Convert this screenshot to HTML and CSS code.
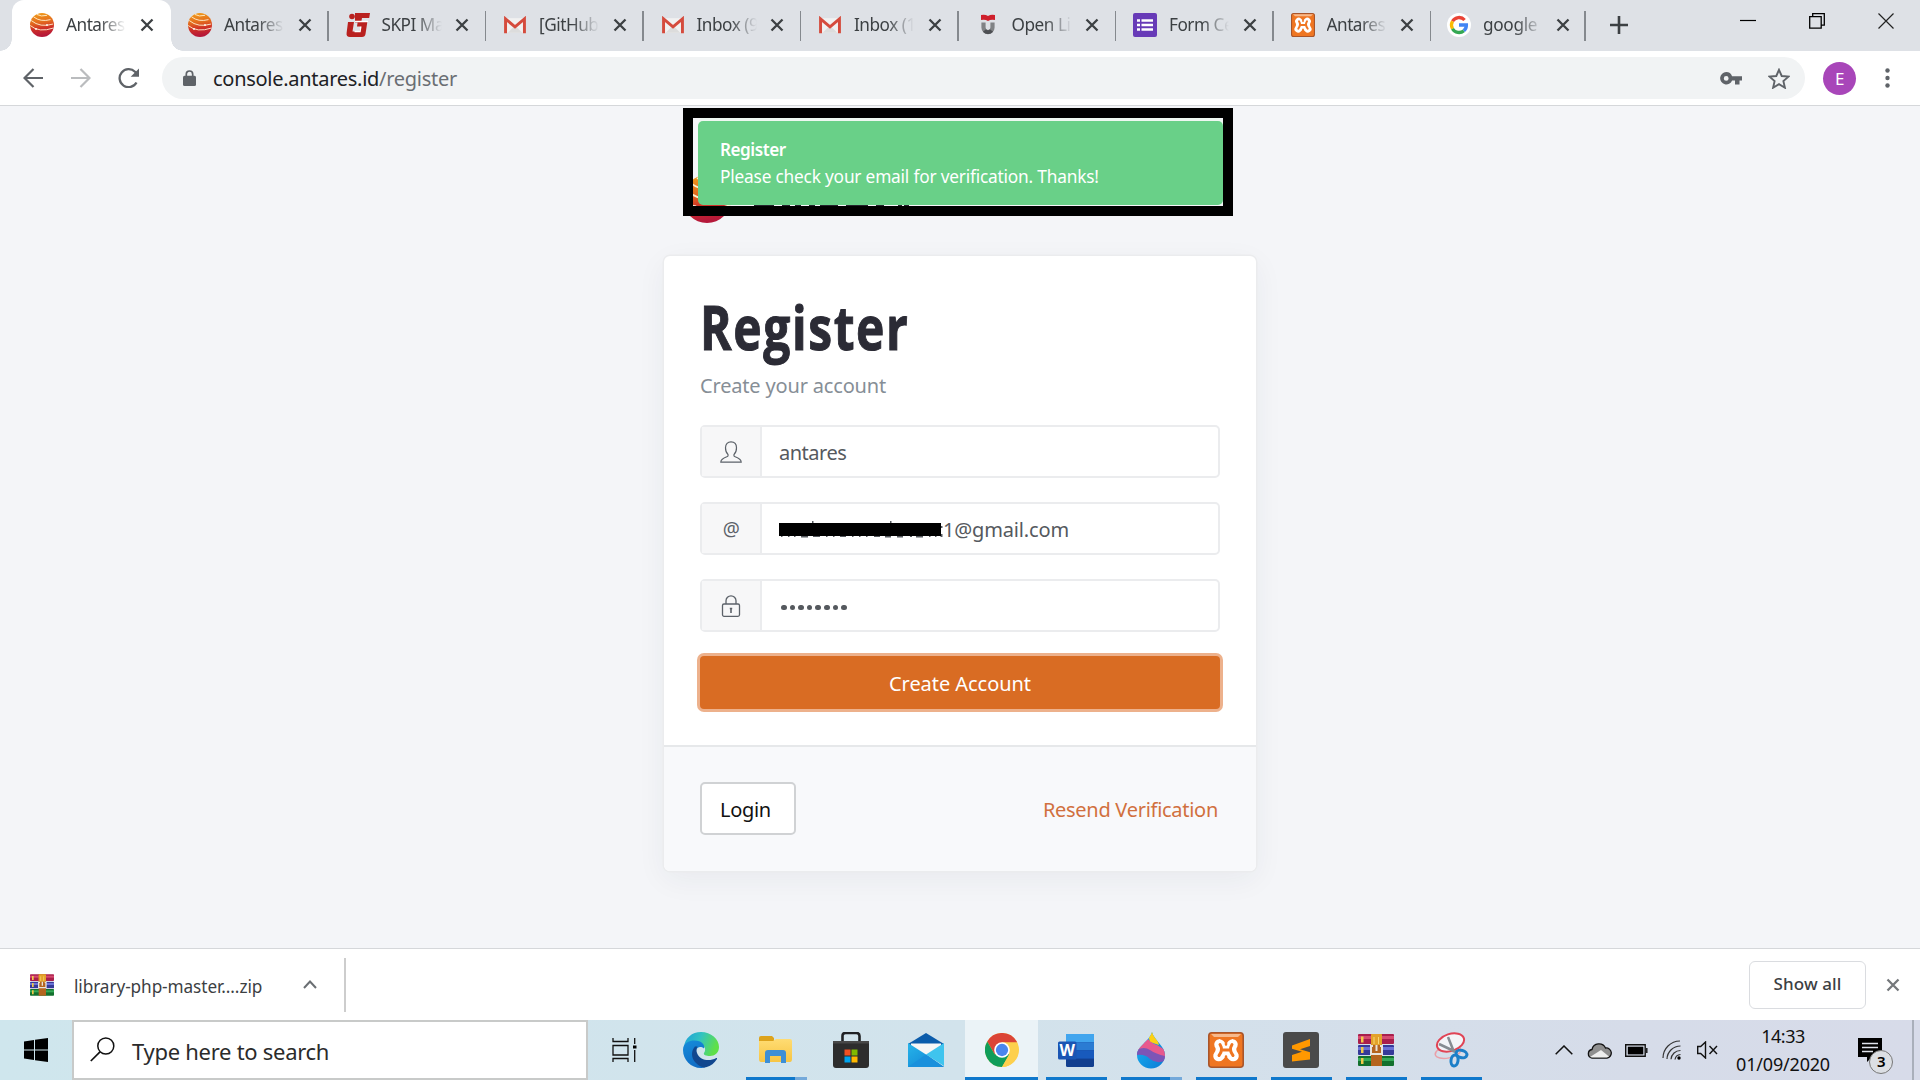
FILE: index.html
```html
<!DOCTYPE html>
<html lang="en">
<head>
<meta charset="utf-8">
<title>Antares Register</title>
<link rel="stylesheet" href="styles.css">
</head>
<body>
<svg class="defs" aria-hidden="true">
  <defs>
    <linearGradient id="ballg" x1="0" y1="0" x2="0.15" y2="1"><stop offset="0" stop-color="#f3a31b"/><stop offset=".45" stop-color="#e2681e"/><stop offset=".7" stop-color="#cf3027"/><stop offset="1" stop-color="#b5183a"/></linearGradient>
    <linearGradient id="edgea" x1="0" y1="0" x2="1" y2=".3"><stop offset="0" stop-color="#1c9fdc"/><stop offset=".5" stop-color="#33c3c0"/><stop offset="1" stop-color="#5fe048"/></linearGradient>
    <linearGradient id="edgeb" x1="0" y1="0" x2=".4" y2="1"><stop offset="0" stop-color="#168cda"/><stop offset="1" stop-color="#0f6cc4"/></linearGradient>
    <linearGradient id="drop" x1="0" y1="0" x2="1" y2="1"><stop offset="0" stop-color="#19b5f1"/><stop offset="1" stop-color="#0a7bd6"/></linearGradient>
    <linearGradient id="mailg" x1="0" y1="0" x2="1" y2="1"><stop offset="0" stop-color="#27b5ea"/><stop offset="1" stop-color="#0f7fd2"/></linearGradient>
    <linearGradient id="fold" x1="0" y1="0" x2="0" y2="1"><stop offset="0" stop-color="#ffdc73"/><stop offset="1" stop-color="#f7c544"/></linearGradient>
    <symbol id="ball" viewBox="0 0 24 24"><circle cx="12" cy="12" r="12" fill="url(#ballg)"/><path d="M3.500 3.800q7 5.500 17 2.800M1.200 7.500q9 7.500 22 3.500M.2 12.500Q9 20 23.500 15M7 1.500q4 2.500 10 .8" fill="none" stroke="#fff2d0" stroke-width=".9"/><circle cx="6" cy="16" r=".9" fill="#fff"/><circle cx="17" cy="12" r=".9" fill="#fff"/></symbol>
    <symbol id="gmail" viewBox="0 0 24 18"><path d="M2 1h20v16H2z" fill="#f1f1f1"/><path d="M4 17l8-8 8 8z" fill="#dcdcdc"/><path d="M1.700 17.500V1.800L12 10.500 22.300 1.800v15.700" fill="none" stroke="#d54b3d" stroke-width="3.200"/></symbol>
    <symbol id="close" viewBox="0 0 14 14"><path d="M1.500 1.500l11 11m0-11l-11 11" stroke="currentColor" stroke-width="2.300" fill="none"/></symbol>
    <symbol id="xampp" viewBox="0 0 36 36"><rect x=".8" y=".8" width="34.400" height="34.400" rx="3" fill="#ef7622" stroke="#a9552a" stroke-width="1.600"/><path d="M3 2h30l-3 3H6z" fill="#f6b98c"/><g fill="none" stroke-linecap="round" stroke-linejoin="round"><path d="M11.500 12.500Q15 18 10.500 24M24.500 12.500Q21 18 25.500 24M13 18.500H23M11.500 12.500l3 3M24.500 12.500l-3 3M11 24l3-3M25 24l-3-3" stroke="#fff" stroke-width="10.500"/><path d="M18 7.500v5M18 24.500v5" stroke="#ef7622" stroke-width="2.500"/><path d="M12 12.500Q15.500 18 11 23.500M24 12.500Q20.500 18 25 23.500M14 18H22" stroke="#ef7622" stroke-width="3"/></g></symbol>
    <symbol id="rar" viewBox="0 0 36 32"><rect width="36" height="10" rx="1" fill="#a91f4c"/><rect y="2" width="36" height="3" fill="#d64a70"/><rect y="11" width="36" height="10" rx="1" fill="#363a99"/><rect y="13" width="36" height="3" fill="#6a72d6"/><rect y="22" width="36" height="10" rx="1" fill="#13702d"/><rect y="24" width="36" height="3" fill="#35a957"/><path d="M3 2.500h2.500v6H3zM3 13h2.500v6H3zM3 24h2.500v6H3z" fill="#f2c94a"/><rect x="13" width="11" height="32" fill="#b5651f"/><rect x="13" width="11" height="11" rx="1" fill="#e3a229"/><path d="M16 3v7M20.500 3v7" stroke="#f9d873" stroke-width="1"/><path d="M15 12h-2v8h11v-8h-2M18.500 11v6" fill="none" stroke="#e8e4dc" stroke-width="2"/></symbol>
  </defs>
</svg>

<header class="tabstrip">
  <div class="tab active"><svg class="fav"><use href="#ball"/></svg><span class="title">Antares</span><svg class="x"><use href="#close"/></svg></div>
  <div class="tab"><svg class="fav"><use href="#ball"/></svg><span class="title">Antares</span><svg class="x"><use href="#close"/></svg></div>
  <div class="tab"><svg class="fav" viewBox="0 0 24 24"><path d="M9 0h15l-.8 5H16l-.6 3.500h6L19.500 21q-.4 3-3.500 3H4q-4 0-3.400-4L2 9h6L6.500 18.500h7l.8-5H11l.6-4H9z" fill="#b9211f"/><circle cx="6" cy="3.500" r="2.800" fill="#b9211f"/><path d="M9 8.500h13M8.500 18.500h5.500l.8-5" stroke="#fff" stroke-width="1.500" fill="none"/></svg><span class="title">SKPI Ma</span><svg class="x"><use href="#close"/></svg></div>
  <div class="tab"><svg class="fav gm"><use href="#gmail"/></svg><span class="title">[GitHub</span><svg class="x"><use href="#close"/></svg></div>
  <div class="tab"><svg class="fav gm"><use href="#gmail"/></svg><span class="title">Inbox (9</span><svg class="x"><use href="#close"/></svg></div>
  <div class="tab"><svg class="fav gm"><use href="#gmail"/></svg><span class="title">Inbox (1</span><svg class="x"><use href="#close"/></svg></div>
  <div class="tab"><svg class="fav" viewBox="0 0 24 24"><path d="M5 2q4-1 7 1 3-2 7-1v5q-4-1-7 1-3-2-7-1z" fill="#cf1f2c"/><path d="M7.500 9.500v5a4.500 4.500 0 0 0 9 0v-5" fill="none" stroke="#808285" stroke-width="4.200"/><path d="M8.500 17.500a4.500 4.500 0 0 0 7 0" fill="none" stroke="#4d4f53" stroke-width="4"/></svg><span class="title">Open Li</span><svg class="x"><use href="#close"/></svg></div>
  <div class="tab"><svg class="fav" viewBox="0 0 24 24"><rect width="24" height="24" rx="2" fill="#673ab7"/><path d="M4 7.500h3M8.500 7.500H20M4 12h3M8.500 12H20M4 16.500h3M8.500 16.500H20" stroke="#fff" stroke-width="2.500"/></svg><span class="title">Form Ce</span><svg class="x"><use href="#close"/></svg></div>
  <div class="tab"><svg class="fav"><use href="#xampp"/></svg><span class="title">Antares</span><svg class="x"><use href="#close"/></svg></div>
  <div class="tab last"><svg class="fav" viewBox="0 0 24 24"><circle cx="12" cy="12" r="12" fill="#fff"/><g fill="none" stroke-width="3.300"><path d="M17.600 7A7.500 7.500 0 0 0 5.500 8.300" stroke="#ea4335"/><path d="M5.500 8.300a7.500 7.500 0 0 0 0 7.400" stroke="#fbbc05"/><path d="M5.500 15.700A7.500 7.500 0 0 0 16.900 17.700" stroke="#34a853"/><path d="M16.900 17.700Q19.500 15.500 19.400 12H12" stroke="#4285f4"/></g></svg><span class="title">google</span><svg class="x"><use href="#close"/></svg></div>
  <svg class="plus" viewBox="0 0 18 18"><path d="M9 0v18M0 9h18" stroke="#3c4043" stroke-width="2.600"/></svg>
  <div class="wincontrols">
    <svg viewBox="0 0 16 16"><path d="M0 7.500h16" stroke="#000" stroke-width="1.200"/></svg>
    <svg viewBox="0 0 16 16"><path d="M.7 3.700h11.500v11.500H.7zM3.700 3.700V.700h11.600v11.500h-3" fill="none" stroke="#000" stroke-width="1.300"/></svg>
    <svg viewBox="0 0 16 16"><path d="M.5.500l15 15m0-15l-15 15" stroke="#222" stroke-width="1.200"/></svg>
  </div>
</header>

<nav class="toolbar">
  <div class="navicons">
    <svg viewBox="0 0 20 20"><path d="M20 10H1.500M10.500 1L1.500 10l9 9" fill="none" stroke="#5f6368" stroke-width="2.200"/></svg>
    <svg viewBox="0 0 20 20"><path d="M0 10h18.500M9.500 1l9 9-9 9" fill="none" stroke="#babcbe" stroke-width="2.200"/></svg>
    <svg viewBox="0 0 22 20"><path d="M18.500 14.500A9 9 0 1 1 17 3.800l2 2" fill="none" stroke="#5f6368" stroke-width="2.300"/><path d="M21 .5v8.300h-8.300z" fill="#5f6368"/></svg>
  </div>
  <div class="omnibox">
    <svg class="lock" viewBox="0 0 13 16"><path d="M3.300 7V4.200a3.200 3.200 0 0 1 6.400 0V7" fill="none" stroke="#5f6368" stroke-width="1.700"/><rect y="5.800" width="13" height="10.200" rx="1.500" fill="#5f6368"/></svg>
    <span class="url">console.antares.id<i>/register</i></span>
    <svg class="key" viewBox="0 0 22 13"><path d="M6.200 0a6.200 6.200 0 1 0 5.900 8.500H15V12.500h4.500V8.500H22V4.300H12.100A6.200 6.200 0 0 0 6.200 0zm0 4a2.400 2.400 0 1 1 0 4.800 2.400 2.400 0 0 1 0-4.800z" fill="#5f6368"/></svg>
    <svg class="star" viewBox="0 0 22 21"><path d="M11 1.800l2.700 6.200 6.800.6-5.100 4.500 1.500 6.600L11 16.200l-5.900 3.500 1.500-6.600L1.500 8.600 8.300 8z" fill="none" stroke="#5f6368" stroke-width="1.900"/></svg>
  </div>
  <span class="avatar">E</span>
  <svg class="dots" viewBox="0 0 5 20"><circle cx="2.500" cy="2.500" r="2.200"/><circle cx="2.500" cy="10" r="2.200"/><circle cx="2.500" cy="17.500" r="2.200"/></svg>
</nav>

<main class="page">
  <div class="brand"><svg class="brandball"><use href="#ball"/></svg><svg class="brandname" viewBox="0 0 160 4"><path d="M0 2h20M28 2h8M41 2h6M55 2h6M66 2h18M92 2h22M122 2h8M144 2h4M150 2h5" stroke="#23232b" stroke-width="3"/></svg></div>
  <div class="frame">
    <div class="toast"><b>Register</b><span>Please check your email for verification. Thanks!</span></div>
  </div>
  <section class="card">
    <form class="form">
      <h1><span>Register</span></h1>
      <p>Create your account</p>
      <div class="field"><div class="addon"><svg viewBox="0 0 22 22"><path d="M8 13.500C6.200 12 5.500 9.500 5.500 6.800 5.500 3 7.800.8 11 .8s5.500 2.200 5.500 6c0 2.700-.7 5.200-2.500 6.700v1.500c0 1 7.200 1.800 7.200 6.200H.8C.8 16.800 8 16 8 15z" fill="none" stroke="#5c6269" stroke-width="1.200"/></svg></div><div class="input name">antares</div></div>
      <div class="field"><div class="addon at">@</div><div class="input"><svg class="redact" viewBox="0 0 164 19"><path d="M2 16h1.500M9 16h1.500M15 16h1.500M22 16.500h7M34 16h7M47 16h1.500M54 16h1.500M61 16h6M73 16h1.500M80 16h1.500M87 16h1.500M95 16h6M106 16.500h6M118 16.500h6M131 16h2M137 16.500h7M150 16h1.500M156 16h1.500M33 2h1.500M111 2h1.500M162.500 6v2M162.500 14v3" stroke="#55595e" stroke-width="2"/><path d="M0 3h162v13H0z"/></svg><span>1@gmail.com</span></div></div>
      <div class="field"><div class="addon"><svg viewBox="0 0 22 22"><rect x="2.500" y="9" width="17" height="12.300" rx="1.500" fill="none" stroke="#5c6269" stroke-width="1.300"/><path d="M6 9V5.800a5 5 0 0 1 10 0V9" fill="none" stroke="#5c6269" stroke-width="1.300"/><path d="M11 14v4M9.800 13.500h2.400" stroke="#5c6269" stroke-width="1.600"/></svg></div><div class="input pw"><i></i><i></i><i></i><i></i><i></i><i></i><i></i><i></i></div></div>
      <div class="submit">Create Account</div>
    </form>
    <footer class="cardfoot"><span class="login">Login</span><a class="resend">Resend Verification</a></footer>
  </section>
</main>

<section class="shelf">
  <div class="download"><svg class="zipicon"><use href="#rar"/></svg><span class="zipname">library-php-master....zip</span><svg class="chev" viewBox="0 0 14 9"><path d="M1 8l6-6.500L13 8" fill="none" stroke="#6b6f73" stroke-width="2"/></svg></div>
  <span class="showall">Show all</span>
  <svg class="shelfx"><use href="#close"/></svg>
</section>

<footer class="taskbar">
  <div class="start"><svg viewBox="0 0 24 24"><path d="M0 3.500l10-1.500v9.500H0zM11 1.800L24 0v11.500H11zM0 12.500h10V22L0 20.500zM11 12.500h13V24l-13-1.800z"/></svg></div>
  <div class="search"><svg viewBox="0 0 25 25"><circle cx="15.800" cy="9" r="8" fill="none" stroke="#111" stroke-width="1.500"/><path d="M10 14.800L.8 24" stroke="#111" stroke-width="1.700"/></svg><span>Type here to search</span></div>
  <div class="task view"><svg width="26" height="24" viewBox="0 0 26 24"><path d="M1 0v3.500h15V0M1 7.500h15v9.500H1zM1 24v-3.500h15V24M22.700 0v6M22.700 12v12" fill="none" stroke="#111" stroke-width="1.300"/><path d="M21 7.500h3.500v3H21z"/></svg></div>
  <div class="task"><svg width="36" height="36" viewBox="0 0 36 36"><path d="M1 15C2 6 9 0 18 0c10 0 18 7 18 15 0 6-4.500 9-9 9-4 0-7-1-6-3 3-4 0-9-6-10C9 10 4 12 1 15z" fill="url(#edgea)"/><path d="M0 18C0 11 6 8.500 11.500 8.500c7 0 11 4.500 9.500 8-6-5-11 3-7.500 9C17 31 24 32 29 29.500 25 35 20 36 18 36 8 36 0 28 0 18z" fill="url(#edgeb)"/><path d="M12 14.500c-4 4-4 11 0 15.500 4 4.500 9 6 11 5.300 5-1.300 8.500-4.300 11-8.300.3-.8-.5-1.300-1.200-.8C28 29 17 29.500 14 21c-.8-2.500-.5-5 .5-6.500z" fill="#11478e"/></svg></div>
  <div class="task run many"><svg width="33" height="28" viewBox="0 0 33 28"><path d="M0 2q0-2 2-2h11l2 2v5H0z" fill="#dda31c"/><path d="M0 5h14l3-2h14q2 0 2 2v18q0 3-2 3H2q-2 0-2-3z" fill="url(#fold)"/><path d="M6 27V17q0-3 3-3h15q3 0 3 3v10h-5v-7H11v7z" fill="#3d8fd6"/></svg></div>
  <div class="task"><svg width="36" height="36" viewBox="0 0 36 36"><path d="M9.500 10V4q0-3 3-3h11q3 0 3 3v6" fill="none" stroke="#202124" stroke-width="2.600"/><path d="M0 9h36v24q0 3-3 3H3q-3 0-3-3z" fill="#2d2d2d"/><path d="M0 9h36v2.500H0z" fill="#484848"/><path d="M11.500 17.500h6v6h-6z" fill="#f25022"/><path d="M18.500 17.500h6v6h-6z" fill="#7fba00"/><path d="M11.500 24.500h6v6h-6z" fill="#00a4ef"/><path d="M18.500 24.500h6v6h-6z" fill="#ffb900"/></svg></div>
  <div class="task"><svg width="36" height="34" viewBox="0 0 36 34"><path d="M0 11L18 0l18 11-3 2H3z" fill="#0b5cab"/><path d="M3 10.500h30V14L18 24 3 14z" fill="#f6f6f6"/><path d="M0 10l18 11.500L36 34H0z" fill="url(#mailg)"/><path d="M36 10L18 21.500 36 33z" fill="#3fc4ee"/><path d="M0 34h36L18 21.500z" fill="#1990dc"/></svg></div>
  <div class="task run current"><svg width="34" height="34" viewBox="0 0 48 48"><circle cx="24" cy="24" r="24" fill="#fdd04d"/><path d="M3.200 12A24 24 0 0 1 44.800 12L45 13.500H24L13.600 30z" fill="#db4437"/><path d="M3.200 12A24 24 0 0 0 24 48L34.400 30H13.600z" fill="#109d59"/><path d="M44.800 13.500H24L34.400 30 24 48A24 24 0 0 0 44.800 13.500z" fill="#fdd04d"/><circle cx="24" cy="24" r="11" fill="#fff"/><circle cx="24" cy="24" r="8.700" fill="#4a86ee"/></svg></div>
  <div class="task run"><svg width="36" height="33" viewBox="0 0 36 33"><rect x="8" width="28" height="33" rx="1.500" fill="#123f8f"/><path d="M8 0h28v8.200H8z" fill="#41a5ee"/><path d="M8 8.200h28v8.200H8z" fill="#2b7cd3"/><path d="M8 16.400h28v8.200H8z" fill="#185abd"/><rect y="7.500" width="18.500" height="18" rx="1.500" fill="#1a55b3"/><text x="9.200" y="21.500" text-anchor="middle" class="wordw">W</text></svg></div>
  <div class="task run many"><svg width="28" height="37" viewBox="0 0 28 37"><clipPath id="dc"><path d="M15 0c2 8 13 14 13 23a14 13.500 0 0 1-28 0C0 14 12 10 15 0z"/></clipPath><g clip-path="url(#dc)"><path d="M0 0h28v37H0z" fill="url(#drop)"/><path d="M10-1h8l4 14-9-3z" fill="#fdd013"/><path d="M0 19Q3 10 11 7q3 4 9 6l8 5v8q-8-1-14-6-6-3-14-1z" fill="#e8598d"/><path d="M0 18q7-4 13 0t15 6v5q-9 3-15-2-5-5-13-4z" fill="#7d55b6"/></g></svg></div>
  <div class="task run"><svg width="36" height="36"><use href="#xampp"/></svg></div>
  <div class="task run"><svg width="36" height="36" viewBox="0 0 36 36"><rect width="36" height="36" rx="3" fill="#4a4a4a"/><path d="M9 13.500L27 7v7l-10 3.300 10 3v7.200L9 29.500V23l10-3.200-10-3z" fill="#ff9800"/></svg></div>
  <div class="task run"><svg width="36" height="32"><use href="#rar"/></svg></div>
  <div class="task run"><svg width="36" height="36" viewBox="0 0 36 36"><ellipse cx="15" cy="20" rx="13" ry="6" transform="rotate(-12 15 20)" fill="none" stroke="#eaa0a8" stroke-width="1.500"/><ellipse cx="17.500" cy="10.500" rx="14" ry="8.500" transform="rotate(-18 17.500 10.500)" fill="#f3f5f8" stroke="#e04455" stroke-width="2"/><path d="M15 5l6 15M6 12l17 8" stroke="#868c92" stroke-width="2.500"/><ellipse cx="28.500" cy="22" rx="5.500" ry="3.600" transform="rotate(15 28.500 22)" fill="none" stroke="#1c7fc8" stroke-width="3"/><ellipse cx="21.500" cy="28.500" rx="3.500" ry="5.500" transform="rotate(8 21.500 28.500)" fill="none" stroke="#1c7fc8" stroke-width="3"/></svg></div>
  <div class="tray">
    <svg width="18" height="10" viewBox="0 0 18 10"><path d="M.7 9.300L9 1l8.300 8.300" fill="none" stroke="#111" stroke-width="1.500"/></svg>
    <svg class="cloud" width="25" height="17" viewBox="0 0 25 17"><path d="M5 16a4.300 4.300 0 0 1 0-8.500A7.200 7.200 0 0 1 18.500 6 5 5 0 0 1 20 16z" fill="#8f8f8f" stroke="#111" stroke-width="1.300"/><path d="M3 15l11-7 8 6.500-2 1H5z" fill="#eee"/></svg>
    <svg class="battery" width="23" height="13" viewBox="0 0 23 13"><path d="M.7.700h19.500v11.600H.7zM21.800 4v5" fill="none" stroke="#111" stroke-width="1.400"/><path d="M2.800 2.700h15.500v7.700H2.800z"/></svg>
    <svg width="20" height="20" viewBox="0 0 20 20"><path d="M1 18A17 17 0 0 1 18 1M5 19A13.500 13.500 0 0 1 18.500 6M9 19.300A9.500 9.500 0 0 1 18.500 10.500M13 19.500a6 6 0 0 1 5.500-5" fill="none" stroke="#333" stroke-width="1.200"/><circle cx="17" cy="18" r="1.700"/></svg>
    <svg width="21" height="18" viewBox="0 0 21 18"><path d="M.7 5.500h3L8.500 1v16l-4.800-4.500h-3zM12.500 5l7.500 8m0-8l-7.500 8" fill="none" stroke="#111" stroke-width="1.400"/></svg>
  </div>
  <div class="clock"><span>14:33</span><span class="date">01/09/2020</span></div>
  <div class="notify"><svg viewBox="0 0 24 25"><path d="M0 0h24v19H14l-5 5v-5H0z"/><path d="M4 5.500h16M4 9.500h16M4 13.500h11" stroke="#dfe3ec" stroke-width="1.300"/></svg><span class="badge">3</span></div>
  <div class="peek"></div>
</footer>
</body>
</html>
```
FILE: styles.css
```css
* { box-sizing: border-box; }
body {
  margin: 0;
  width: 1920px;
  height: 1080px;
  overflow: hidden;
  display: grid;
  grid-template-rows: 51px 55px 842px 72px 60px;
  font-family: "Noto Sans", sans-serif;
  letter-spacing: -0.48px;
  color: #3c4043;
  background: #f4f5f8;
}
svg { display: block; flex: none; }
.defs { position: absolute; width: 0; height: 0; }

/* Tab strip */
.tabstrip { display: flex; background: #dee1e6; padding-left: 12px; }
.tab {
  flex: none;
  width: 157.500px;
  height: 51px;
  padding: 10px 17px 11px;
  display: flex;
  align-items: center;
  position: relative;
}
.tab.active { width: 159px; padding-left: 18px; background: #fff; border-radius: 12px 12px 0 0; }
.tab.last { width: 154.500px; padding-left: 16px; padding-right: 16px; }
.tab.active::before, .tab.active::after {
  content: "";
  position: absolute;
  bottom: 0;
  left: -12px;
  width: 12px;
  height: 12px;
  background: radial-gradient(circle at 0 0, transparent 11.500px, #fff 12px);
}
.tab.active::after { left: auto; right: -12px; background: radial-gradient(circle at 100% 0, transparent 11.500px, #fff 12px); }
.tab:not(.active)::after {
  content: "";
  position: absolute;
  right: 0;
  top: 11px;
  width: 1.500px;
  height: 30px;
  background: #85898e;
}
.fav { width: 24px; height: 24px; }
.fav.gm { padding: 3px 1px 2px; }
.title {
  width: 60px;
  margin: 0 7px 0 12px;
  overflow: hidden;
  white-space: nowrap;
  font-size: 17.200px;
  line-height: 26px;
  -webkit-mask-image: linear-gradient(90deg, #000 55%, transparent);
  mask-image: linear-gradient(90deg, #000 55%, transparent);
}
.last .title { letter-spacing: -0.3px; }
.x { width: 14px; height: 14px; margin-left: auto; color: #3c4043; }
.plus { width: 18px; height: 18px; margin: 16px 0 0 24px; }
.wincontrols { display: flex; gap: 53px; margin: 13px 26px 0 auto; }
.wincontrols svg { width: 16px; height: 16px; }

/* Toolbar */
.toolbar {
  display: flex;
  align-items: center;
  background: #fff;
  border-bottom: 1px solid #d5d7da;
  padding: 0 30px 0 23px;
}
.navicons { display: flex; gap: 28px; width: 139px; }
.navicons svg { width: 20px; height: 20px; }
.navicons svg:last-child { width: 22px; margin-left: -1px; }
.omnibox {
  width: 1643px;
  height: 42px;
  border-radius: 21px;
  background: #f1f3f4;
  display: flex;
  align-items: center;
  padding: 0 15px 0 21px;
}
.lock { width: 13px; height: 16px; }
.url { margin-left: 17px; font-size: 20px; letter-spacing: -0.28px; color: #202124; }
.url i { font-style: normal; color: #6a6e73; }
.key { width: 22px; height: 13px; margin-left: auto; }
.star { width: 22px; height: 21px; margin-left: 26px; }
.avatar {
  width: 33px;
  height: 33px;
  margin-left: 18px;
  border-radius: 50%;
  background: #a846b9;
  color: #fff;
  font-size: 17px;
  line-height: 33px;
  text-align: center;
}
.dots { width: 5px; height: 20px; margin-left: auto; fill: #5f6368; }

/* Page */
.page { position: relative; padding-top: 150px; }
.brand { position: absolute; left: 683px; top: 69px; }
.brandball { width: 48px; height: 48px; }
.brandname { position: absolute; left: 71px; top: 28px; width: 160px; height: 4px; }
.frame {
  position: absolute;
  left: 683px;
  top: 2px;
  width: 550px;
  height: 108px;
  border: 10px solid #000;
  padding: 3px 0 0 5px;
}
.toast {
  height: 84px;
  border-radius: 5px;
  background: #69d088;
  box-shadow: 0 -3px 0 #eef7f1;
  color: #fff;
  font-size: 17.300px;
  letter-spacing: -0.2px;
  line-height: 27px;
  padding: 15px 22px;
  display: flex;
  flex-direction: column;
}
.toast b { font-weight: 600; font-size: 17.100px; letter-spacing: -0.45px; }
.card {
  width: 592px;
  height: 615px;
  margin: 0 auto;
  border-radius: 6px;
  background: #fff;
  box-shadow: 0 0 0 1.500px #ebecee, 0 8px 30px rgba(40, 45, 60, .06);
  overflow: hidden;
}
.form { height: 489px; padding: 33px 36px 0; }
h1 {
  margin: 0;
  height: 76px;
  font: 700 60px/76px "Open Sans", sans-serif;
  letter-spacing: 2px;
  color: #2b2b35;
  -webkit-text-stroke: 1px #2b2b35;
}
h1 span { display: inline-block; transform: scaleX(.8); transform-origin: 0 50%; }
.form p { margin: 6px 0 24px; font-size: 20px; line-height: 30px; letter-spacing: -0.17px; color: #868e96; }
.field {
  display: flex;
  height: 53px;
  margin-bottom: 24px;
  border: 2px solid #ebecee;
  border-radius: 5px;
}
.addon {
  width: 60px;
  border-right: 2px solid #ebecee;
  background: #f7f7f8;
  display: flex;
  align-items: center;
  justify-content: center;
  color: #5c6269;
}
.addon svg { width: 22px; height: 22px; }
.addon.at { font-size: 19px; }
.input { display: flex; align-items: center; padding: 2px 0 0 17px; font-size: 20px; letter-spacing: -0.16px; color: #55595e; }
.input.name { letter-spacing: -0.5px; }
.redact { width: 164px; height: 19px; }
.input.pw { gap: 3px; padding: 0 0 0 19px; }
.pw i { width: 5.600px; height: 5.600px; border-radius: 50%; background: #55595e; margin-top: 4px; }
.submit {
  height: 53px;
  border-radius: 4px;
  background: #d96c23;
  box-shadow: 0 0 0 3px #edb18c;
  color: #fff;
  font-size: 20px;
  line-height: 56px;
  letter-spacing: -0.05px;
  text-align: center;
}
.cardfoot {
  height: 126px;
  padding: 0 38px 2px 36px;
  border-top: 2px solid #e6e8ea;
  background: #f8f9fb;
  display: flex;
  align-items: center;
  justify-content: space-between;
  font-size: 20px;
}
.login {
  width: 96px;
  height: 53px;
  border: 2px solid #d0d2d4;
  border-radius: 5px;
  background: #fff;
  color: #111;
  line-height: 52px;
  padding-left: 18px;
  letter-spacing: -0.3px;
}
.resend { color: #d1703e; letter-spacing: -0.28px; padding-top: 3px; }

/* Download shelf */
.shelf {
  display: flex;
  align-items: center;
  background: #fff;
  border-top: 1.500px solid #d5d7da;
  padding-right: 20px;
}
.download {
  width: 346px;
  height: 54px;
  padding-left: 30px;
  border-right: 2px solid #cdcdcd;
  display: flex;
  align-items: center;
}
.zipicon { width: 24px; height: 22px; }
.zipname { margin-left: 20px; padding-top: 3px; width: 190px; font-size: 17.200px; letter-spacing: -0.08px; white-space: nowrap; }
.chev { width: 14px; height: 9px; margin-left: 39px; }
.showall {
  width: 117px;
  height: 48px;
  margin-left: auto;
  border: 1.500px solid #dadce0;
  border-radius: 6px;
  font-size: 17px;
  font-weight: 500;
  line-height: 44px;
  letter-spacing: 0.1px;
  text-align: center;
}
.shelfx { width: 14px; height: 14px; margin-left: 20px; color: #75787b; }

/* Taskbar */
.taskbar { display: flex; background: linear-gradient(90deg, #cfe6ed, #d2e3ec 50%, #d6dce9 85%, #d7dbe9); }
.start { width: 72px; padding: 18px 24px; }
.start svg { width: 24px; height: 24px; }
.search {
  width: 516px;
  border: 2px solid #c8cac9;
  background: #fff;
  display: flex;
  align-items: center;
  padding: 0 0 2px 16px;
  gap: 17px;
  font-size: 22px;
  letter-spacing: -0.28px;
  color: #2b2b2b;
}
.search span { padding-top: 3px; }
.search svg { width: 25px; height: 25px; }
.task {
  position: relative;
  width: 75px;
  display: flex;
  align-items: center;
  justify-content: center;
}
.task.view { padding-right: 1px; }
.task.run::after {
  content: "";
  position: absolute;
  left: 8px;
  right: 6px;
  bottom: 0;
  height: 3px;
  background: #0f78cc;
}
.task.many::after { background: linear-gradient(90deg, #0f78cc 80%, #74a9da 80%); }
.task.current { background: #ebf3f7; margin-left: 2px; width: 73px; }
.task.current::after { left: 0; right: 0; }
.wordw { font: 700 16px "Open Sans", sans-serif; fill: #fff; letter-spacing: 0; }
.tray { display: flex; align-items: center; gap: 15px; margin-left: auto; }
.cloud { margin: 0 -2px 0 -1px; }
.battery { margin-right: -1px; }
.clock {
  width: 130px;
  display: flex;
  flex-direction: column;
  align-items: center;
  font-size: 18px;
  line-height: 28px;
  padding-top: 2px;
  color: #111;
}
.date { letter-spacing: -0.18px; }
.notify { position: relative; width: 64px; padding: 18px 0 0 10px; }
.notify svg { width: 24px; height: 25px; }
.badge {
  position: absolute;
  left: 21px;
  top: 30px;
  width: 24px;
  height: 24px;
  border: 1.500px solid #777;
  border-radius: 50%;
  background: #dcdfe4;
  color: #000;
  font-size: 15px;
  font-weight: 600;
  line-height: 21px;
  text-align: center;
}
.peek { width: 8px; border-left: 2px solid #a9afba; }
```
